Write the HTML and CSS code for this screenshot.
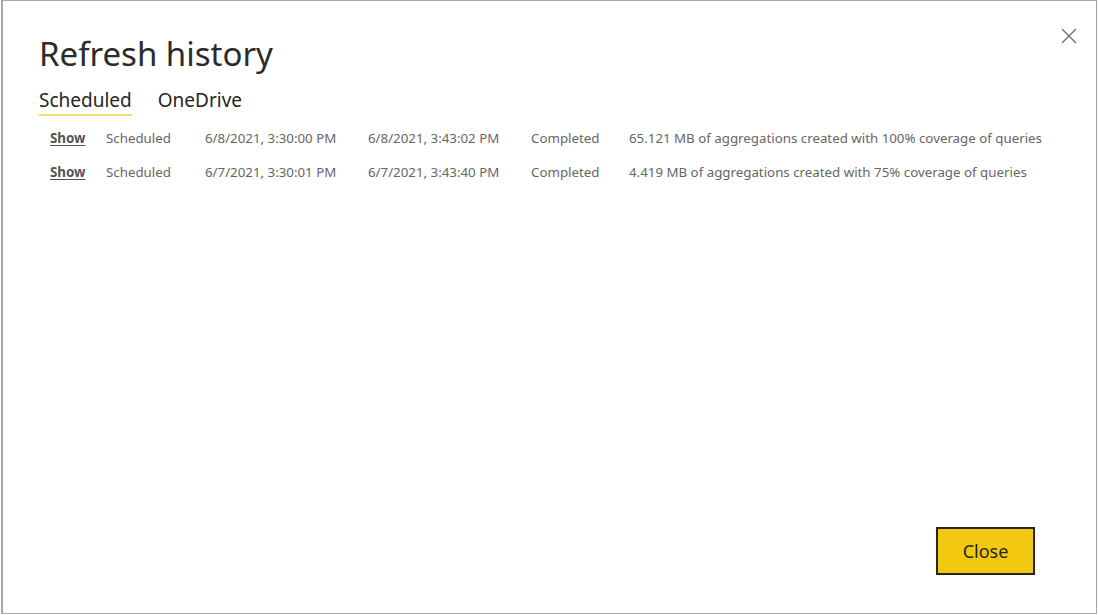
FILE: index.html
```html
<!DOCTYPE html>
<html>
<head>
<meta charset="utf-8">
<link rel="stylesheet" href="styles.css">
</head>
<body>
<div class="dialog">
  <button class="x-btn" aria-label="Close">
    <svg width="16" height="16" viewBox="0 0 16 16"><path d="M1 1L15 15M15 1L1 15" stroke="#6e6e6e" stroke-width="1.4" fill="none"/></svg>
  </button>
  <h1 class="title">Refresh history</h1>
  <div class="tabs">
    <span class="tab active">Scheduled</span>
    <span class="tab">OneDrive</span>
  </div>
  <div class="rows">
    <div class="row">
      <span class="c1"><a class="show">Show</a></span>
      <span class="c2">Scheduled</span>
      <span class="c3">6/8/2021, 3:30:00 PM</span>
      <span class="c4">6/8/2021, 3:43:02 PM</span>
      <span class="c5">Completed</span>
      <span class="c6">65.121 MB of aggregations created with 100% coverage of queries</span>
    </div>
    <div class="row">
      <span class="c1"><a class="show">Show</a></span>
      <span class="c2">Scheduled</span>
      <span class="c3">6/7/2021, 3:30:01 PM</span>
      <span class="c4">6/7/2021, 3:43:40 PM</span>
      <span class="c5">Completed</span>
      <span class="c6">4.419 MB of aggregations created with 75% coverage of queries</span>
    </div>
  </div>
  <div class="footer">
    <button class="close-btn">Close</button>
  </div>
</div>
</body>
</html>
```
FILE: styles.css
```css
html, body {
  margin: 0;
  padding: 0;
  background: #ffffff;
}
body {
  font-family: "Noto Sans", "Open Sans", sans-serif;
}
.dialog {
  position: relative;
  box-sizing: border-box;
  width: 1096px;
  height: 614px;
  margin-left: 1px;
  border: 1px solid #a6a6a6;
  border-left-width: 2px;
  display: flex;
  flex-direction: column;
  padding: 0 0 0 36px;
}
.x-btn {
  position: absolute;
  top: 27px;
  right: 19px;
  border: 0;
  background: transparent;
  padding: 0;
  width: 16px;
  height: 16px;
  display: flex;
}
.title {
  margin: 30px 0 0 0;
  font-weight: 400;
  font-size: 33px;
  line-height: 46px;
  color: #2b2b2b;
  letter-spacing: 0;
}
.tabs {
  display: flex;
  gap: 26px;
  margin-top: 10px;
}
.tab {
  font-size: 19px;
  line-height: 26px;
  color: #252525;
  padding-bottom: 1px;
}
.tab.active {
  border-bottom: 2px solid #f6dc6a;
}
.rows {
  display: flex;
  flex-direction: column;
  margin-top: 5px;
  padding-left: 11px;
}
.row {
  display: flex;
  height: 34px;
  align-items: center;
  font-size: 13.3px;
  color: #666666;
  white-space: nowrap;
}
.c1 { width: 56px; }
.c2 { width: 99px; }
.c3 { width: 163px; }
.c4 { width: 163px; }
.c5 { width: 98px; }
.show {
  color: #555555;
  font-weight: 700;
  text-decoration: underline;
  text-underline-offset: 2px;
}
.footer {
  margin-top: auto;
  display: flex;
  justify-content: flex-end;
  padding: 0 61px 38px 0;
}
.close-btn {
  box-sizing: border-box;
  width: 99px;
  height: 48px;
  background: #f2c811;
  border: 2px solid #252525;
  font-family: "Noto Sans", "Open Sans", sans-serif;
  font-size: 18px;
  color: #252525;
  padding: 0;
}
```
